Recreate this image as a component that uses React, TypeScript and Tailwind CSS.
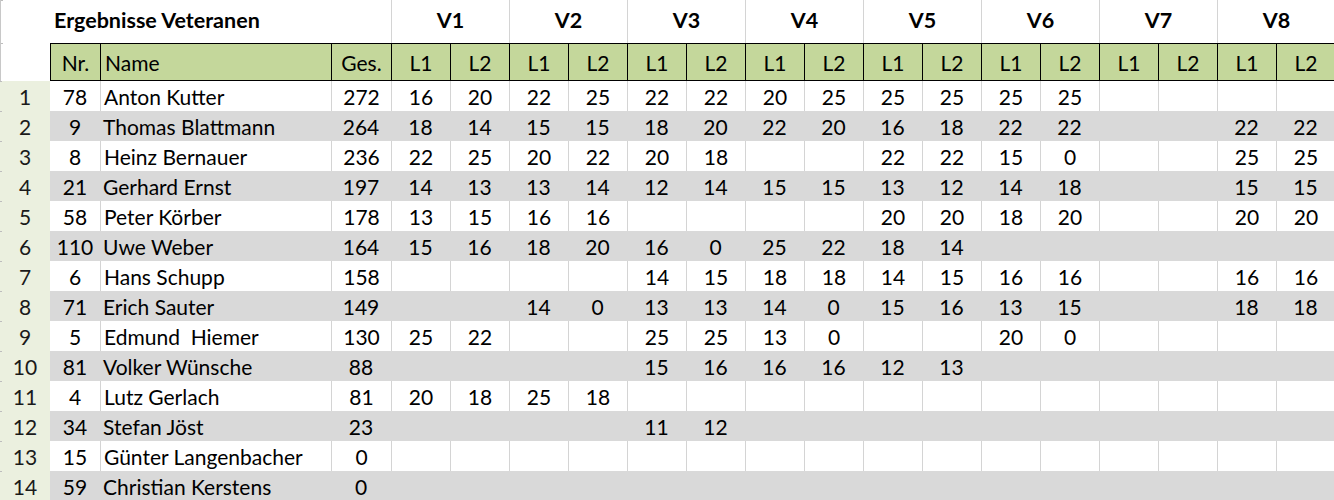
import React from "react";

type Row = { nr: string; name: string; ges: string; v: string[] };

const raw: [string, string, string, string][] = [
  ["78", "Anton Kutter", "272", "16 20 22 25 22 22 20 25 25 25 25 25 _ _ _ _"],
  ["9", "Thomas Blattmann", "264", "18 14 15 15 18 20 22 20 16 18 22 22 _ _ 22 22"],
  ["8", "Heinz Bernauer", "236", "22 25 20 22 20 18 _ _ 22 22 15 0 _ _ 25 25"],
  ["21", "Gerhard Ernst", "197", "14 13 13 14 12 14 15 15 13 12 14 18 _ _ 15 15"],
  ["58", "Peter Körber", "178", "13 15 16 16 _ _ _ _ 20 20 18 20 _ _ 20 20"],
  ["110", "Uwe Weber", "164", "15 16 18 20 16 0 25 22 18 14 _ _ _ _ _ _"],
  ["6", "Hans Schupp", "158", "_ _ _ _ 14 15 18 18 14 15 16 16 _ _ 16 16"],
  ["71", "Erich Sauter", "149", "_ _ 14 0 13 13 14 0 15 16 13 15 _ _ 18 18"],
  ["5", "Edmund  Hiemer", "130", "25 22 _ _ 25 25 13 0 _ _ 20 0 _ _ _ _"],
  ["81", "Volker Wünsche", "88", "_ _ _ _ 15 16 16 16 12 13 _ _ _ _ _ _"],
  ["4", "Lutz Gerlach", "81", "20 18 25 18 _ _ _ _ _ _ _ _ _ _ _ _"],
  ["34", "Stefan Jöst", "23", "_ _ _ _ 11 12 _ _ _ _ _ _ _ _ _ _"],
  ["15", "Günter Langenbacher", "0", "_ _ _ _ _ _ _ _ _ _ _ _ _ _ _ _"],
  ["59", "Christian Kerstens", "0", "_ _ _ _ _ _ _ _ _ _ _ _ _ _ _ _"],
];

const rows: Row[] = raw.map(([nr, name, ges, v]) => ({
  nr,
  name,
  ges,
  v: v.split(" ").map((x) => (x === "_" ? "" : x)),
}));

const cols = "grid grid-cols-[50px_50px_231px_60px_repeat(16,59px)]";

function RowHead({ children, green }: { children?: React.ReactNode; green?: boolean }) {
  return (
    <div
      className={
        "relative flex items-center justify-center text-[#1a1a1a] " +
        (green ? "bg-[#ebf0df]" : "bg-white border-l border-[#c8c8c8]")
      }
    >
      <div className="absolute left-0 top-0 h-px w-[2px] bg-[#bdbdbd]" />
      {children}
    </div>
  );
}

export default function App() {
  return (
    <div
      className="w-[1334px] h-[500px] overflow-hidden bg-white text-[21px] leading-none text-black"
      style={{ fontFamily: "Lato, 'Open Sans', sans-serif" }}
    >
      <div className="w-[1340px]">
        {/* Title row */}
        <div className="grid grid-cols-[50px_341px_repeat(8,118px)] h-[43px]">
          <RowHead />
          <div className="flex items-center pl-[4px] pb-[2px] font-bold text-[21.5px]">
            Ergebnisse Veteranen
          </div>
          {["V1", "V2", "V3", "V4", "V5", "V6", "V7", "V8"].map((v) => (
            <div
              key={v}
              className="flex items-center justify-center pb-[2px] border-l border-[#d4d4d4] font-bold text-[21.5px]"
            >
              {v}
            </div>
          ))}
        </div>

        {/* Header row */}
        <div className={cols + " h-[38px]"}>
          <RowHead />
          <div className="flex items-center justify-center bg-[#c4d79b] border-y border-l border-black">
            Nr.
          </div>
          <div className="flex items-center pl-[4px] bg-[#c4d79b] border-y border-l border-black">
            Name
          </div>
          <div className="flex items-center justify-center bg-[#c4d79b] border-y border-l border-black">
            Ges.
          </div>
          {Array.from({ length: 16 }).map((_, i) => (
            <div
              key={i}
              className="flex items-center justify-center bg-[#c4d79b] border-y border-l border-black"
            >
              {i % 2 === 0 ? "L1" : "L2"}
            </div>
          ))}
        </div>

        {/* Data rows */}
        {rows.map((r, idx) => {
          const gray = idx % 2 === 1;
          const cell = gray
            ? "bg-[#d9d9d9]"
            : "bg-white border-l border-[#d4d4d4]";
          return (
            <div key={idx} className={cols + " h-[30px]"}>
              <RowHead green>{idx + 1}</RowHead>
              <div className={"flex items-center justify-center " + (gray ? "bg-[#d9d9d9]" : "bg-white")}>
                {r.nr}
              </div>
              <div className={"flex items-center pl-[3px] whitespace-pre " + cell}>
                {r.name}
              </div>
              <div className={"flex items-center justify-center " + cell}>
                {r.ges}
              </div>
              {r.v.map((x, i) => (
                <div key={i} className={"flex items-center justify-center " + cell}>
                  {x}
                </div>
              ))}
            </div>
          );
        })}
      </div>
    </div>
  );
}
